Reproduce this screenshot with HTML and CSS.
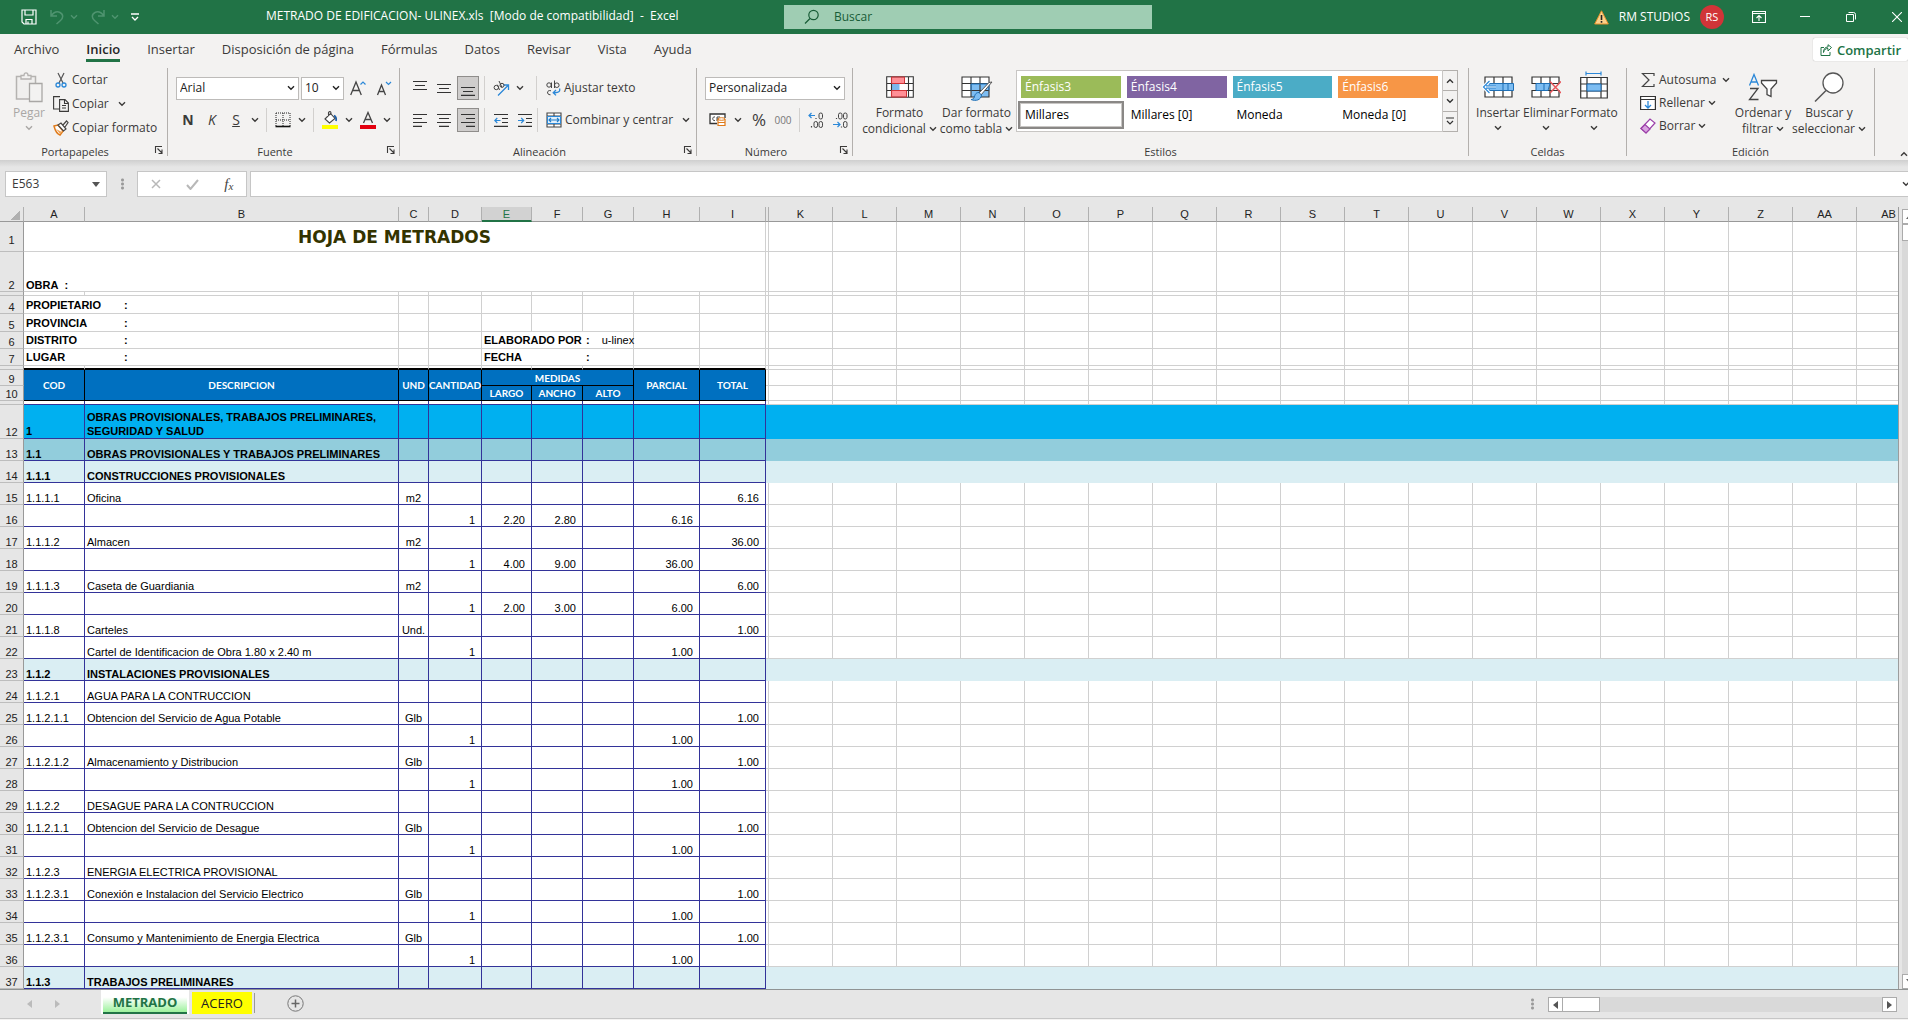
FILE: index.html
```html
<!DOCTYPE html>
<html lang="es">
<head>
<meta charset="utf-8">
<title>METRADO DE EDIFICACION- ULINEX.xls - Excel</title>
<link rel="stylesheet" href="styles.css">
</head>
<body>
<svg class="defs" width="0" height="0" aria-hidden="true">
  <symbol id="chev" viewBox="0 0 8 6"><path d="M1 1.2 4 4.2 7 1.2" fill="none" stroke="currentColor" stroke-width="1.4"/></symbol>
  <symbol id="launch" viewBox="0 0 10 10"><path d="M1.5 8V1.500H8M3.500 3.500 8 8M8 4.500V8.500H4.500" fill="none" stroke="currentColor" stroke-width="1.1"/></symbol>
</svg>

<header class="titlebar">
  <div class="quick">
    <button aria-label="Guardar"><svg width="16" height="16" viewBox="0 0 16 16"><path d="M1 1h14v14H3l-2-2zM4 1v5h8V1M5 15v-4.500h6V15M7 12.500V15" fill="none" stroke="#fff" stroke-width="1.2"/></svg></button>
    <button class="faded split" aria-label="Deshacer"><svg width="16" height="16" viewBox="0 0 16 16"><path d="M2 1v6h6M2 7C5 3 8 2 11 3.500c4 2 3 6 .500 8L7.500 15" fill="none" stroke="currentColor" stroke-width="1.5"/></svg><svg width="8" height="6"><use href="#chev"/></svg></button>
    <button class="faded split" aria-label="Rehacer"><svg width="16" height="16" viewBox="0 0 16 16"><path d="M14 1v6H8M14 7C11 3 8 2 5 3.500c-4 2-3 6-.500 8L8.500 15" fill="none" stroke="currentColor" stroke-width="1.5"/></svg><svg width="8" height="6"><use href="#chev"/></svg></button>
    <button aria-label="Personalizar barra"><svg width="8" height="8" viewBox="0 0 8 8"><path d="M0 1h8M1 4l3 3 3-3" fill="none" stroke="#fff" stroke-width="1.3"/></svg></button>
  </div>
  <h1 class="doc-title">METRADO DE EDIFICACION- ULINEX.xls&nbsp; [Modo de compatibilidad]&nbsp; -&nbsp; Excel</h1>
  <label class="search"><svg width="16" height="16" viewBox="0 0 16 16"><circle cx="9.500" cy="6" r="4.700" fill="none" stroke="#185c37" stroke-width="1.2"/><path d="M6 9.500 1 14.500" stroke="#185c37" stroke-width="1.3"/></svg><input type="text" placeholder="Buscar" aria-label="Buscar"></label>
  <div class="account">
    <svg width="15" height="15" viewBox="0 0 15 15"><path d="M7.500.800 14.300 14H.700z" fill="#fbd28b" stroke="#e8912d"/><path d="M7.500 5v5M7.500 11v1.700" stroke="#222" stroke-width="1.600"/></svg>
    <span class="user">RM STUDIOS</span><span class="avatar">RS</span>
  </div>
  <div class="window-buttons">
    <button aria-label="Opciones de la cinta"><svg width="14" height="12" viewBox="0 0 14 12"><path d="M.500.500h13v11H.500zM.500 2.500h13M7 10V4.500M4.500 7 7 4.500 9.500 7" fill="none" stroke="#fff" stroke-width="1.1"/></svg></button>
    <button aria-label="Minimizar"><svg width="10" height="10" viewBox="0 0 10 10"><path d="M0 4.500h10" stroke="#fff"/></svg></button>
    <button aria-label="Restaurar"><svg width="10" height="10" viewBox="0 0 10 10"><path d="M.500 2.500h7v7h-7zM2.500.500h5a2 2 0 0 1 2 2v5" fill="none" stroke="#fff"/></svg></button>
    <button aria-label="Cerrar"><svg width="10" height="10" viewBox="0 0 10 10"><path d="M0 0 10 10M10 0 0 10" stroke="#fff" stroke-width="1.1"/></svg></button>
  </div>
</header>

<nav class="tabs">
  <a href="#">Archivo</a><a href="#" class="active">Inicio</a><a href="#">Insertar</a><a href="#">Disposición de página</a><a href="#">Fórmulas</a><a href="#">Datos</a><a href="#">Revisar</a><a href="#">Vista</a><a href="#">Ayuda</a>
  <button class="share"><svg width="12" height="12" viewBox="0 0 12 12"><path d="M4 3.500H1v8h9V8M3.500 8.500C4 5.500 5.500 4.500 8 4.500V7l3.500-3.500L8 .700v2.300C5 3 3.500 5 3.500 8.500z" fill="none" stroke="#217346"/></svg>Compartir</button>
</nav>

<div class="ribbon">
  <section class="group clipboard">
    <div class="body">
      <button class="big paste"><span class="art"><svg width="28" height="32" viewBox="0 0 28 32"><path d="M1.500 5.500h19V28h-19z" fill="#f0efee" stroke="#b5b3b1" stroke-width="1.500"/><path d="M6 8V4.500h3C9 1 13 1 13 4.500h3V8z" fill="#f3f2f1" stroke="#b5b3b1" stroke-width="1.300"/><path d="M14.500 12.500h12.500v18H14.500z" fill="#f3f2f1" stroke="#a9a7a5" stroke-width="1.300"/></svg></span><span>Pegar</span><svg width="8" height="6"><use href="#chev"/></svg></button>
      <div class="stack">
        <button class="cmd"><svg width="16" height="16" viewBox="0 0 16 16"><path d="M5 1l5 10M11 1 6 11" fill="none" stroke="#555" stroke-width="1.200"/><circle cx="5" cy="13" r="2" fill="none" stroke="#2b88d8" stroke-width="1.300"/><circle cx="11" cy="13" r="2" fill="none" stroke="#2b88d8" stroke-width="1.300"/></svg>Cortar</button>
        <button class="cmd"><svg width="16" height="16" viewBox="0 0 16 16"><path d="M6 13H.600V.600H7M6.600 3.600H12l3.400 3.400v8.400H6.600zM11.500 4v3.500h3.500M9 9.500h4M9 12h4" fill="none" stroke="#3b3a39" stroke-width="1.100"/></svg>Copiar<svg class="far" width="8" height="6"><use href="#chev"/></svg></button>
        <button class="cmd"><svg width="16" height="16" viewBox="0 0 16 16"><path d="M1 6l4-1 5 6-3 4C4 14 2 10 1 6z" fill="#fff" stroke="#e07b1a" stroke-width="1.500"/><path d="M3 9l4 5 2-2z" fill="#f2a65a"/><path d="M5 5l3-2 5 6-2.500 2zM10 5l3.500-4L15 2.500 12 7" fill="#fff" stroke="#484644" stroke-width="1.200"/></svg>Copiar formato</button>
      </div>
    </div>
    <div class="caption"><span>Portapapeles</span><button aria-label="Más opciones de Portapapeles"><svg width="10" height="10"><use href="#launch"/></svg></button></div>
  </section>

  <section class="group font">
    <div class="body rows">
      <div class="row tight">
        <span class="combo font-name"><select aria-label="Fuente"><option>Arial</option></select><svg width="8" height="6"><use href="#chev"/></svg></span>
        <span class="combo font-size"><select aria-label="Tamaño de fuente"><option>10</option></select><svg width="8" height="6"><use href="#chev"/></svg></span>
        <button class="tool" aria-label="Aumentar tamaño"><svg width="16" height="16" viewBox="0 0 16 16"><path d="M.700 15 6 2l5.300 13M2.500 10.500h7" fill="none" stroke="#444" stroke-width="1.300"/><path d="M10.500 4.500 13 2l2.500 2.500" fill="none" stroke="#2b88d8" stroke-width="1.200"/></svg></button>
        <button class="tool" aria-label="Disminuir tamaño"><svg width="16" height="16" viewBox="0 0 16 16"><path d="M1.500 15 5.500 5l4 10M3 11.500h5" fill="none" stroke="#444" stroke-width="1.300"/><path d="M10 2l2.500 2.500L15 2" fill="none" stroke="#2b88d8" stroke-width="1.200"/></svg></button>
      </div>
      <div class="row">
        <button class="tool letter bold">N</button><button class="tool letter italic">K</button><button class="tool letter under">S</button><button class="arrow" aria-label="Subrayados"><svg width="8" height="6"><use href="#chev"/></svg></button>
        <i class="rule"></i>
        <button class="tool" aria-label="Bordes"><svg width="16" height="16" viewBox="0 0 16 16"><path d="M1 1h14M1 8h14M1 1v13M8 1v13M15 1v13" fill="none" stroke="#222" stroke-dasharray="1 1"/><path d="M.500 14.500h15" stroke="#111" stroke-width="1.600"/></svg></button><button class="arrow" aria-label="Más bordes"><svg width="8" height="6"><use href="#chev"/></svg></button>
        <i class="rule"></i>
        <button class="tool" aria-label="Color de relleno"><svg width="16" height="18" viewBox="0 0 16 18"><path d="M0 14h16v4H0z" fill="#ff0"/><path d="M3 8l5.500-5.500 4.500 5-5.500 4.500zM6.500 5V1.500c1-1.500 2.500-1 2.500.500V4" fill="#fff" stroke="#444" stroke-width="1.100"/><path d="M12 4.500c2 1 2.500 3 2 5.500" fill="none" stroke="#1f5fa8" stroke-width="1.800"/></svg></button><button class="arrow" aria-label="Más rellenos"><svg width="8" height="6"><use href="#chev"/></svg></button>
        <button class="tool" aria-label="Color de fuente"><svg width="16" height="18" viewBox="0 0 16 18"><path d="M0 14h16v4H0z" fill="#e3000f"/><path d="M3.500 12 8 1.500 12.500 12M5 8.500h6" fill="none" stroke="#444" stroke-width="1.300"/></svg></button><button class="arrow" aria-label="Más colores"><svg width="8" height="6"><use href="#chev"/></svg></button>
      </div>
    </div>
    <div class="caption"><span>Fuente</span><button aria-label="Más opciones de Fuente"><svg width="10" height="10"><use href="#launch"/></svg></button></div>
  </section>

  <section class="group align">
    <div class="body rows">
      <div class="row">
        <button class="tool" aria-label="Alinear arriba"><svg width="14" height="16" viewBox="0 0 14 16"><path d="M0 1.500h14M2 5.500h10M0 9.500h14" stroke="#333" stroke-width="1.200"/></svg></button>
        <button class="tool" aria-label="Alinear en medio"><svg width="14" height="16" viewBox="0 0 14 16"><path d="M0 4.500h14M2 8.500h10M0 12.500h14" stroke="#333" stroke-width="1.200"/></svg></button>
        <button class="tool on" aria-label="Alinear abajo"><svg width="14" height="16" viewBox="0 0 14 16"><path d="M0 7.500h14M2 11.500h10M0 15.400h14" stroke="#333" stroke-width="1.200"/></svg></button>
        <i class="rule"></i>
        <button class="tool" aria-label="Orientación"><svg width="17" height="16" viewBox="0 0 17 16"><path d="M5 15.500 15 5.500M10.500 5H15.500V10" fill="none" stroke="#2b88d8" stroke-width="1.300"/><circle cx="3.300" cy="7.500" r="2.200" fill="none" stroke="#444"/><path d="M4.500 4.800 6.500 10M6 1l3 6.500" stroke="#444"/><circle cx="9" cy="5.300" r="2" fill="none" stroke="#444"/></svg></button><button class="arrow" aria-label="Más orientaciones"><svg width="8" height="6"><use href="#chev"/></svg></button>
        <i class="rule push"></i>
        <button class="cmd"><svg width="16" height="16" viewBox="0 0 16 16"><circle cx="4" cy="5" r="2.200" fill="none" stroke="#444"/><path d="M6.500 2.500V8M9.500.500V8M6 10.800c-4-1.500-5 4-.500 4" fill="none" stroke="#444"/><circle cx="11.800" cy="5.200" r="2.300" fill="none" stroke="#444"/><path d="M14.500 8.500c1 3-1 4.500-5.500 4.200M11 10l-2.800 2.700L11 15.400" fill="none" stroke="#2b88d8" stroke-width="1.300"/></svg>Ajustar texto</button>
      </div>
      <div class="row">
        <button class="tool" aria-label="Alinear a la izquierda"><svg width="14" height="14" viewBox="0 0 14 14"><path d="M0 1.500h14M0 5.500h9M0 9.500h14M0 13.400h9" stroke="#333" stroke-width="1.200"/></svg></button>
        <button class="tool" aria-label="Centrar"><svg width="14" height="14" viewBox="0 0 14 14"><path d="M0 1.500h14M2 5.500h10M0 9.500h14M2 13.400h10" stroke="#333" stroke-width="1.200"/></svg></button>
        <button class="tool on" aria-label="Alinear a la derecha"><svg width="14" height="14" viewBox="0 0 14 14"><path d="M0 1.500h14M5 5.500h9M0 9.500h14M5 13.400h9" stroke="#333" stroke-width="1.200"/></svg></button>
        <i class="rule"></i>
        <button class="tool" aria-label="Disminuir sangría"><svg width="14" height="14" viewBox="0 0 14 14"><path d="M0 1.500h14M8 5.500h6M8 9.500h6M0 13.400h14" stroke="#333" stroke-width="1.200"/><path d="M6.500 7.500H.800M3.300 5 .800 7.500l2.500 2.500" fill="none" stroke="#2b88d8" stroke-width="1.200"/></svg></button>
        <button class="tool" aria-label="Aumentar sangría"><svg width="14" height="14" viewBox="0 0 14 14"><path d="M0 1.500h14M8 5.500h6M8 9.500h6M0 13.400h14" stroke="#333" stroke-width="1.200"/><path d="M0 7.500h5.700M3.200 5l2.500 2.500-2.500 2.500" fill="none" stroke="#2b88d8" stroke-width="1.200"/></svg></button>
        <i class="rule push"></i>
        <button class="cmd"><svg width="16" height="16" viewBox="0 0 16 16"><path d="M1 1h14v14H1zM1 4h14M1 12h14M8 1v3M8 12v3" fill="#fff" stroke="#444" stroke-width="1.100"/><path d="M1.500 4.500h13v7h-13z" fill="#e2f0fb" stroke="#2b88d8"/><path d="M3 8h10M5 6 3 8l2 2M11 6l2 2-2 2" fill="none" stroke="#1e7bc8" stroke-width="1.100"/></svg>Combinar y centrar<svg class="far" width="8" height="6"><use href="#chev"/></svg></button>
      </div>
    </div>
    <div class="caption"><span>Alineación</span><button aria-label="Más opciones de Alineación"><svg width="10" height="10"><use href="#launch"/></svg></button></div>
  </section>

  <section class="group number">
    <div class="body rows">
      <div class="row tight"><span class="combo number-format"><select aria-label="Formato de número"><option>Personalizada</option></select><svg width="8" height="6"><use href="#chev"/></svg></span></div>
      <div class="row">
        <button class="tool" aria-label="Moneda"><svg width="17" height="14" viewBox="0 0 17 14"><path d="M8 10.500H1V1h15v4" fill="#fff" stroke="#333" stroke-width="1.300"/><path d="M6 4C3 3 3 8.500 6 7.500M8 8V4h3M8 6h2" fill="none" stroke="#444"/><path d="M9 6.500h7v6H9z" fill="#fff" stroke="#e07b1a" stroke-width="1.200"/><ellipse cx="12.500" cy="6" rx="3.500" ry="1.300" fill="#fff" stroke="#e07b1a"/><path d="M9 9.500h7" stroke="#e07b1a"/></svg></button><button class="arrow wide" aria-label="Más monedas"><svg width="8" height="6"><use href="#chev"/></svg></button>
        <button class="tool percent">%</button><button class="tool thousands">000</button>
        <i class="rule"></i>
        <button class="tool decimals" aria-label="Aumentar decimales"><svg width="16" height="16" viewBox="0 0 16 16"><path d="M7 3.500H1M3.500 1 1 3.500 3.500 6" fill="none" stroke="#2b88d8" stroke-width="1.200"/><path d="M8 6v1M3.500 14v1.500" stroke="#444" stroke-width="1.200"/><g fill="none" stroke="#444"><rect x="11" y="1" width="3.500" height="6" rx="1.700"/><rect x="6" y="9.500" width="3.500" height="6" rx="1.700"/><rect x="11" y="9.500" width="3.500" height="6" rx="1.700"/></g></svg></button>
        <button class="tool decimals" aria-label="Disminuir decimales"><svg width="16" height="16" viewBox="0 0 16 16"><path d="M1 12.500h7M5.500 10 8 12.500 5.500 15" fill="none" stroke="#2b88d8" stroke-width="1.200"/><path d="M4.500 6v1M9.500 14.500v1" stroke="#444" stroke-width="1.200"/><g fill="none" stroke="#444"><rect x="6.500" y="1" width="3.500" height="6" rx="1.700"/><rect x="11.500" y="1" width="3.500" height="6" rx="1.700"/><rect x="11.500" y="9.500" width="3.500" height="6" rx="1.700"/></g></svg></button>
      </div>
    </div>
    <div class="caption"><span>Número</span><button aria-label="Más opciones de Número"><svg width="10" height="10"><use href="#launch"/></svg></button></div>
  </section>

  <section class="group styles">
    <div class="body">
      <button class="big"><span class="art"><svg width="28" height="22" viewBox="0 0 28 22"><path d="M.700.700h26.600v20.600H.700z" fill="#fff"/><path d="M5.500 1h13v6h-13zM5.500 15h15v6h-15z" fill="#ff8f96"/><path d="M5.500 8h8v6h-8z" fill="#7bb7ec"/><path d="M.700.700h26.600v20.600H.700zM.700 7.500h26.600M.700 14.500h26.600M5.500.700v20.600M22.500.700v20.600" fill="none" stroke="#333" stroke-width="1.100"/><path d="M5.500 1h13v6.500h-13zM5.500 14.500h15v6.500h-15z" fill="none" stroke="#d13438"/></svg></span><span>Formato</span><span class="line">condicional <svg width="8" height="6"><use href="#chev"/></svg></span></button>
      <button class="big"><span class="art"><svg width="32" height="28" viewBox="0 0 32 28"><path d="M1 4h27v20H1z" fill="#fff"/><path d="M10 11h18v13H10z" fill="#7dbdf2"/><path d="M1 4h27v20H1zM1 10.500h27M1 17.500h27M10 4v20M19 4v20" fill="none" stroke="#333" stroke-width="1.100"/><path d="M10 17.500V11h18v6.500" fill="none" stroke="#1e7bc8"/><path d="M31 9 20 22l-2-2L28 9.500z" fill="#fff" stroke="#555"/><path d="M18 19.500c-4 0-4 3-5 5.500-1 1-2 1.500-3 1.500 5 2 10 .500 10.500-4.500z" fill="#7dbdf2" stroke="#1e6fb5"/></svg></span><span>Dar formato</span><span class="line">como tabla <svg width="8" height="6"><use href="#chev"/></svg></span></button>
      <div class="gallery">
        <div class="swatches">
          <button class="swatch accent3">Énfasis3</button><button class="swatch accent4">Énfasis4</button><button class="swatch accent5">Énfasis5</button><button class="swatch accent6">Énfasis6</button>
          <button class="swatch plain chosen">Millares</button><button class="swatch plain">Millares [0]</button><button class="swatch plain">Moneda</button><button class="swatch plain">Moneda [0]</button>
        </div>
        <div class="spinner">
          <button aria-label="Fila anterior"><svg class="flip" width="8" height="6"><use href="#chev"/></svg></button>
          <button aria-label="Fila siguiente"><svg width="8" height="6"><use href="#chev"/></svg></button>
          <button aria-label="Más estilos"><svg width="8" height="8" viewBox="0 0 8 8"><path d="M0 1h8M1 4l3 3 3-3" fill="none" stroke="#333" stroke-width="1.200"/></svg></button>
        </div>
      </div>
    </div>
    <div class="caption"><span>Estilos</span></div>
  </section>

  <section class="group cells">
    <div class="body">
      <button class="big"><span class="art"><svg width="32" height="28" viewBox="0 0 32 28"><path d="M3 4h27v20H3zM3 10.500h27M3 17.500h27M12 4v20M21 4v20" fill="#fff" stroke="#333" stroke-width="1.200"/><path d="M7 10.500h24.500v7H7z" fill="#7dbdf2" stroke="#1e6fb5"/><path d="M21 11v6M26 11v6" stroke="#1e6fb5"/><path d="M14 14H1.500M7.500 8 1.500 14l6 6" fill="none" stroke="#fff" stroke-width="3.500"/><path d="M14 12.800H4M14 15.200H4M7.500 8 1.500 14l6 6" fill="none" stroke="#2b88d8" stroke-width="1.200"/></svg></span><span>Insertar</span><svg width="8" height="6"><use href="#chev"/></svg></button>
      <button class="big"><span class="art"><svg width="30" height="28" viewBox="0 0 30 28"><path d="M1 10.500V4h27v6.500H1zM1 17.500h27V24H1zM10 4v20M19 4v20" fill="#fff" stroke="#333" stroke-width="1.200"/><path d="M5 10.500h14l-2 7H5z" fill="#7dbdf2" stroke="#1e6fb5"/><path d="M13 11v6" stroke="#1e6fb5"/><path d="M19 8.500 30 20M30 8.500 19 20" stroke="#e8565b" stroke-width="1.500"/></svg></span><span>Eliminar</span><svg width="8" height="6"><use href="#chev"/></svg></button>
      <button class="big"><span class="art"><svg width="28" height="32" viewBox="0 0 28 32"><path d="M6 2.500h15M6 .500v4M21 .500v4" stroke="#2b88d8" stroke-width="1.200"/><path d="M.700 6.500h26.600V27H.700zM.700 13h26.600M.700 20h26.600M7 6.500V27M21 6.500V27" fill="#fff" stroke="#333" stroke-width="1.200"/><path d="M7 13h14v7H7z" fill="#7dbdf2" stroke="#1e6fb5"/></svg></span><span>Formato</span><svg width="8" height="6"><use href="#chev"/></svg></button>
    </div>
    <div class="caption"><span>Celdas</span></div>
  </section>

  <section class="group editing">
    <div class="body">
      <div class="stack">
        <button class="cmd"><svg width="16" height="16" viewBox="0 0 16 16"><path d="M14 4V1.500H2.500L9 8l-6.500 6.500H14V12" fill="none" stroke="#444" stroke-width="1.200"/></svg>Autosuma<svg class="far" width="8" height="6"><use href="#chev"/></svg></button>
        <button class="cmd"><svg width="16" height="16" viewBox="0 0 16 16"><path d="M.600 1.500h14.800v13H.600zM.600 4.500h14.800" fill="#fff" stroke="#333" stroke-width="1.200"/><path d="M8 6v7M5 10l3 3 3-3" fill="none" stroke="#2b88d8" stroke-width="1.300"/></svg>Rellenar<svg width="8" height="6"><use href="#chev"/></svg></button>
        <button class="cmd"><svg width="16" height="16" viewBox="0 0 16 16"><path d="M1 10.500 10 1l5 4-9 10z" fill="#fff" stroke="#9b3fa8" stroke-width="1.200"/><path d="M1 10.500 5 6.500l5 4.500-4 4z" fill="#d9a3e0" stroke="#9b3fa8" stroke-width="1.200"/></svg>Borrar<svg width="8" height="6"><use href="#chev"/></svg></button>
      </div>
      <button class="big"><span class="art"><svg width="30" height="28" viewBox="0 0 30 28"><path d="M1.500 12.500 6 1.500l4.500 11M3 9h6" fill="none" stroke="#2b88d8" stroke-width="1.300"/><path d="M2 15.500h8L1.500 26.500h9" fill="none" stroke="#444" stroke-width="1.300"/><path d="M13.500 7.500h15v2.500L23 16v7.500l-4-2V16l-5.500-6z" fill="#fff" stroke="#444" stroke-width="1.300"/></svg></span><span>Ordenar y</span><span class="line">filtrar <svg width="8" height="6"><use href="#chev"/></svg></span></button>
      <button class="big"><span class="art"><svg width="30" height="30" viewBox="0 0 30 30"><circle cx="19" cy="11" r="10" fill="#fff" stroke="#555" stroke-width="1.300"/><path d="M12 18.500 1 29.500" stroke="#555" stroke-width="1.500"/></svg></span><span>Buscar y</span><span class="line">seleccionar <svg width="8" height="6"><use href="#chev"/></svg></span></button>
    </div>
    <div class="caption"><span>Edición</span></div>
  </section>
  <button class="collapse" aria-label="Contraer la cinta"><svg class="flip" width="8" height="6"><use href="#chev"/></svg></button>
</div>

<div class="formula-bar">
  <label class="name-box"><input type="text" value="E563" aria-label="Cuadro de nombres"><svg width="8" height="5" viewBox="0 0 8 5"><path d="M0 0h8L4 5z" fill="#555"/></svg></label>
  <i class="dots"></i>
  <div class="entry-buttons">
    <button aria-label="Cancelar"><svg width="10" height="10" viewBox="0 0 10 10"><path d="M1 1l8 8M9 1 1 9" stroke="#b8b8b8" stroke-width="1.500"/></svg></button>
    <button aria-label="Introducir"><svg width="13" height="11" viewBox="0 0 13 11"><path d="M1 6l3.500 4L12 1" fill="none" stroke="#b8b8b8" stroke-width="2"/></svg></button>
    <button class="fx">f<small>x</small></button>
  </div>
  <input class="formula" type="text" aria-label="Barra de fórmulas">
  <button class="expand" aria-label="Expandir barra de fórmulas"><svg width="8" height="6"><use href="#chev"/></svg></button>
</div>

<main class="workspace">
  <div class="sheet"><table id="grid"></table></div>
  <div class="vscroll"><button aria-label="Subir"><svg width="8" height="5" viewBox="0 0 8 5"><path d="M0 5h8L4 0z" fill="#666"/></svg></button><i class="thumb"></i><i class="track"></i><button aria-label="Bajar"><svg width="8" height="5" viewBox="0 0 8 5"><path d="M0 0h8L4 5z" fill="#666"/></svg></button></div>
</main>

<footer class="sheet-tabs">
  <div class="nav"><button aria-label="Hoja anterior"><svg width="5" height="8" viewBox="0 0 5 8"><path d="M5 0v8L0 4z" fill="#bbb"/></svg></button><button aria-label="Hoja siguiente"><svg width="5" height="8" viewBox="0 0 5 8"><path d="M0 0v8l5-4z" fill="#bbb"/></svg></button></div>
  <button class="sheet-tab current">METRADO</button>
  <button class="sheet-tab yellow">ACERO</button>
  <i class="tab-rule"></i>
  <button class="add" aria-label="Nueva hoja"><svg width="17" height="17" viewBox="0 0 17 17"><path d="M8.500 4.500v8M4.500 8.500h8" stroke="#666" stroke-width="1.500"/><circle cx="8.500" cy="8.500" r="7.700" fill="none" stroke="#777"/></svg></button>
  <i class="dots"></i>
  <div class="hscroll"><button aria-label="Izquierda"><svg width="5" height="8" viewBox="0 0 5 8"><path d="M5 0v8L0 4z" fill="#555"/></svg></button><i class="thumb"></i><i class="track"></i><button aria-label="Derecha"><svg width="5" height="8" viewBox="0 0 5 8"><path d="M0 0v8l5-4z" fill="#555"/></svg></button></div>
</footer>
<div class="status"></div>
<script src="sheet.js"></script>
</body>
</html>
```
FILE: sheet.js
```js
const letters = ['A','B','C','D','E','F','G','H','I','J','K','L','M','N','O','P','Q','R','S','T','U','V','W','X','Y','Z','AA','AB'];
const widths = [61, 314, 30, 53, 50, 51, 51, 66, 66, 3];
const heights = { 1: 30, 2: 40, 3: 4, 4: 18, 5: 18, 6: 17, 7: 17, 8: 4, 9: 16, 10: 15, 11: 4, 12: 34 };

// Heading block: [text, colspan, class, rowspan]
const heading = {
  1: [['HOJA DE METRADOS', 9, 'title']],
  2: [['OBRA&nbsp; :', 9, 'strong']],
  4: [['<span>PROPIETARIO</span>:', 2, 'field'], ...blanks(7)],
  5: [['<span>PROVINCIA</span>:', 2, 'field'], ...blanks(7)],
  6: [['<span>DISTRITO</span>:', 2, 'field'], ...blanks(2), ['<span>ELABORADO POR</span>: <em>u-linex</em>', 3, 'field author'], ...blanks(2)],
  7: [['<span>LUGAR</span>:', 2, 'field'], ...blanks(2), ['<span>FECHA</span>:', 3, 'field author'], ...blanks(2)],
  9: [['COD', 1, 'head', 2], ['DESCRIPCION', 1, 'head', 2], ['UND', 1, 'head', 2], ['CANTIDAD', 1, 'head', 2], ['MEDIDAS', 3, 'head'], ['PARCIAL', 1, 'head', 2], ['TOTAL', 1, 'head', 2]],
  10: [['LARGO', 1, 'head'], ['ANCHO', 1, 'head'], ['ALTO', 1, 'head']]
};

// Data rows from 12 on: code, description, unit, quantity, length, width, height, partial, total, level
const data = [
  ['1', 'OBRAS PROVISIONALES, TRABAJOS PRELIMINARES,<br>SEGURIDAD Y SALUD', '', '', '', '', '', '', '', 'level1'],
  ['1.1', 'OBRAS PROVISIONALES Y TRABAJOS PRELIMINARES', '', '', '', '', '', '', '', 'level2'],
  ['1.1.1', 'CONSTRUCCIONES PROVISIONALES', '', '', '', '', '', '', '', 'level3'],
  ['1.1.1.1', 'Oficina', 'm2', '', '', '', '', '', '6.16'],
  ['', '', '', '1', '2.20', '2.80', '', '6.16', ''],
  ['1.1.1.2', 'Almacen', 'm2', '', '', '', '', '', '36.00'],
  ['', '', '', '1', '4.00', '9.00', '', '36.00', ''],
  ['1.1.1.3', 'Caseta de Guardiania', 'm2', '', '', '', '', '', '6.00'],
  ['', '', '', '1', '2.00', '3.00', '', '6.00', ''],
  ['1.1.1.8', 'Carteles', 'Und.', '', '', '', '', '', '1.00'],
  ['', 'Cartel de Identificacion de Obra 1.80 x 2.40 m', '', '1', '', '', '', '1.00', ''],
  ['1.1.2', 'INSTALACIONES PROVISIONALES', '', '', '', '', '', '', '', 'level3'],
  ['1.1.2.1', 'AGUA PARA LA CONTRUCCION', '', '', '', '', '', '', ''],
  ['1.1.2.1.1', 'Obtencion del Servicio de Agua Potable', 'Glb', '', '', '', '', '', '1.00'],
  ['', '', '', '1', '', '', '', '1.00', ''],
  ['1.1.2.1.2', 'Almacenamiento y Distribucion', 'Glb', '', '', '', '', '', '1.00'],
  ['', '', '', '1', '', '', '', '1.00', ''],
  ['1.1.2.2', 'DESAGUE PARA LA CONTRUCCION', '', '', '', '', '', '', ''],
  ['1.1.2.1.1', 'Obtencion del Servicio de Desague', 'Glb', '', '', '', '', '', '1.00'],
  ['', '', '', '1', '', '', '', '1.00', ''],
  ['1.1.2.3', 'ENERGIA ELECTRICA PROVISIONAL', '', '', '', '', '', '', ''],
  ['1.1.2.3.1', 'Conexión e Instalacion del Servicio Electrico', 'Glb', '', '', '', '', '', '1.00'],
  ['', '', '', '1', '', '', '', '1.00', ''],
  ['1.1.2.3.1', 'Consumo y Mantenimiento de Energia Electrica', 'Glb', '', '', '', '', '', '1.00'],
  ['', '', '', '1', '', '', '', '1.00', ''],
  ['1.1.3', 'TRABAJOS PRELIMINARES', '', '', '', '', '', '', '', 'level3']
];

function blanks(count, cls = '') {
  return Array.from({ length: count }, () => ['', 1, cls]);
}

function cell([text, span, cls, rows]) {
  return `<td class="${cls || ''}" colspan="${span || 1}" rowspan="${rows || 1}">${text}</td>`;
}

const html = ['<colgroup><col style="width:24px">'];
letters.forEach((_, i) => html.push(`<col style="width:${widths[i] || 64}px">`));
html.push('</colgroup><thead><tr><th class="corner"></th>');
letters.forEach(l => html.push(`<th scope="col" class="${l === 'E' ? 'selected' : ''}">${l === 'J' ? '' : l}</th>`));
html.push('</tr></thead><tbody>');

for (let r = 1; r <= 37; r++) {
  const item = data[r - 12];
  const level = item ? item[9] || '' : '';
  const thin = r === 3 || r === 8 || r === 11;
  let cells;
  if (item) cells = item.slice(0, 9).map((t, i) => [t, 1, i < 2 ? 'item' : i === 2 ? 'item unit' : 'item num']);
  else cells = heading[r] || blanks(9, r === 8 ? 'above-head' : r === 11 ? 'item' : '');
  html.push(`<tr class="${level} ${thin ? 'thin' : ''} row-${r}" style="height:${heights[r] || 22}px"><th scope="row">${thin ? '' : r}</th>`);
  html.push(cells.map(cell).join(''), blanks(19).map(cell).join(''), '</tr>');
}
html.push('</tbody>');
document.getElementById('grid').innerHTML = html.join('');
```
FILE: styles.css
```css
* { box-sizing: border-box; }
body {
  margin: 0;
  height: 100vh;
  display: flex;
  flex-direction: column;
  overflow: hidden;
  background: #e6e6e6;
  color: #3b3a39;
  font: 12px/16px "Open Sans", "Noto Sans", sans-serif;
}
button, input, select { font: inherit; color: inherit; margin: 0; padding: 0; border: 0; background: none; border-radius: 0; }
button { display: flex; align-items: center; justify-content: center; white-space: nowrap; }
svg { flex: none; display: block; }
.defs { position: absolute; }
.flip { transform: rotate(180deg); }

/* Title bar */
.titlebar { flex: none; height: 34px; display: flex; align-items: center; background: #217346; color: #fff; }
.quick { flex: none; width: 266px; display: flex; align-items: center; padding-left: 21px; gap: 12px; }
.quick .split { gap: 5px; }
.faded { color: #4f9470; }
.doc-title { flex: none; width: 518px; margin: 0; font-size: 12px; font-weight: 400; line-height: 16px; white-space: nowrap; padding-bottom: 2px; }
.search { flex: none; width: 368px; height: 24px; display: flex; align-items: center; gap: 14px; padding-left: 20px; background: #9fcdb3; color: #185c37; }
.search input { flex: 1; min-width: 0; outline: 0; }
.search input::placeholder { color: #185c37; opacity: 1; }
.account { flex: 1; display: flex; align-items: center; justify-content: flex-end; gap: 10px; }
.avatar { width: 24px; height: 24px; border-radius: 50%; background: #d13438; text-align: center; line-height: 24px; font-size: 11px; }
.window-buttons { display: flex; align-items: center; margin-left: 12px; }
.window-buttons button { width: 46px; height: 32px; }
.window-buttons button:last-child { width: 34px; padding-left: 12px; }

/* Ribbon tabs */
.tabs { flex: none; height: 34px; display: flex; gap: 27px; padding-left: 14px; background: #f3f2f1; font-size: 13px; align-items: flex-start; }
.tabs a { color: inherit; text-decoration: none; height: 28px; line-height: 18px; padding-top: 6px; white-space: nowrap; }
.tabs .active { border-bottom: 3px solid #217346; font-weight: 600; color: #262626; }
.share { margin-left: auto; margin-top: 4px; height: 23px; width: 95px; gap: 5px; background: #fff; border-radius: 2px; box-shadow: 0 0 1px #999; color: #217346; font-size: 13px; font-weight: 600; }

/* Ribbon */
.ribbon { flex: none; height: 92px; display: flex; background: #f3f2f1; }
.group { flex: none; height: 88px; display: flex; flex-direction: column; border-right: 1px solid #b3b0ad; }
.clipboard { width: 168px; }
.font { width: 232px; }
.align { width: 297px; }
.number { width: 156px; }
.styles { flex: 1; }
.cells { width: 158px; }
.editing { width: 248px; }
.body { height: 76px; display: flex; }
.caption { height: 12px; display: flex; align-items: center; line-height: 16px; font-size: 11px; }
.caption span { flex: 1; text-align: center; padding-top: 4px; }
.caption button { width: 17px; height: 12px; }
.big { flex-direction: column; justify-content: flex-start; }
.big .art { height: 37px; display: flex; align-items: center; }
.big > svg { margin-top: 4px; }
.big .line { display: flex; align-items: center; gap: 3px; }
.paste { width: 42px; margin: 0 6px 0 8px; color: #a9a7a5; }
.stack { display: flex; flex-direction: column; }
.clipboard .stack { flex: 1; margin-left: -3px; }
.stack .cmd { height: 24px; }
.cmd { justify-content: flex-start; gap: 3px; }
.cmd .far { margin-left: 6px; }
.rows { flex-direction: column; padding: 8px 0 0 8px; gap: 8px; }
.row { height: 24px; display: flex; align-items: center; }
.tight { gap: 2px; }
.tool { flex: none; width: 24px; height: 24px; }
.on { width: 22px; margin: 0 1px; background: #cfcdcc; border: 1px solid #8f8d8b; }
.letter { font-size: 14px; }
.bold { font-weight: 700; }
.italic { font-style: italic; }
.under { text-decoration: underline; }
.arrow { width: 14px; height: 24px; }
.rule { flex: none; width: 1px; height: 24px; margin: 0 4px; background: #d2d0ce; }
.combo { flex: none; display: grid; align-items: center; height: 23px; background: #fff; border: 1px solid #bdbbb9; color: #222; }
.combo > * { grid-area: 1 / 1; }
.combo select { appearance: none; height: 21px; padding-left: 3px; outline: 0; }
.combo svg { justify-self: end; margin-right: 3px; pointer-events: none; }
.font-name { width: 123px; }
.font-size { width: 43px; }
.number-format { width: 140px; }
.align .push { margin: 0 8px 0 auto; }
.align .cmd { width: 151px; }
.wide { width: 20px; }
.percent { font-size: 17px; }
.thousands { font-size: 10px; color: #777; }
.styles .body { padding-left: 8px; }
.styles .big { width: 77px; }
.gallery { flex: 1; display: flex; height: 62px; margin: 2px 10px 0 1px; }
.swatches { flex: 1; display: grid; grid-template-columns: repeat(4, 1fr); grid-template-rows: 22px 28px; gap: 3px 6px; padding: 5px 4px; border: 1px solid #c8c6c4; background: #fff; }
.swatch { justify-content: flex-start; padding-left: 4px; color: #fff; }
.accent3 { background: #9bbb59; }
.accent4 { background: #8064a2; }
.accent5 { background: #4bacc6; }
.accent6 { background: #f79646; }
.plain { color: #000; }
.chosen { margin: 0 -3px; padding-left: 5px; border: 2px solid #8a8886; box-shadow: inset 0 0 0 1px #c8c6c4; }
.spinner { width: 15px; display: flex; flex-direction: column; }
.spinner button { flex: 1; border: 1px solid #b3b0ad; border-left-width: 0; color: #333; }
.spinner button + button { border-top: 0; }
.cells .body { padding-left: 5px; }
.cells .big { width: 48px; }
.editing .body { padding-left: 13px; }
.editing .stack { width: 90px; }
.editing .stack .cmd { height: 23px; }
.editing .big { width: 66px; }
.editing .stack .far { margin-left: 3px; }
.collapse { width: 33px; align-items: flex-end; justify-content: flex-end; padding-bottom: 3px; }

/* Formula bar */
.formula-bar { flex: none; height: 47px; display: flex; align-items: flex-start; padding: 11px 0 0 5px; background: linear-gradient(#cfcfcf, #e6e6e6 7px); }
.name-box { width: 102px; height: 26px; display: flex; align-items: center; padding: 0 6px; background: #fff; border: 1px solid #c6c6c6; }
.name-box input { flex: 1; min-width: 0; outline: 0; }
.dots { width: 3px; height: 12px; margin: 7px 13px 7px 14px; background: radial-gradient(circle, #999 1px, transparent 2px) 0 0 / 3px 4px; }
.entry-buttons { width: 110px; height: 26px; display: flex; justify-content: space-around; background: #fff; border: 1px solid #c6c6c6; }
.fx { font: italic 15px/20px "Liberation Serif", serif; color: #444; }
.fx small { font-size: 11px; padding-top: 4px; }
.formula { flex: 1; height: 26px; margin-left: 3px; background: #fff; border: 1px solid #c6c6c6; border-right: 0; outline: 0; }
.expand { width: 6px; height: 26px; background: #fff; border: solid #c6c6c6; border-width: 1px 0; overflow: hidden; justify-content: flex-start; }

/* Worksheet */
.workspace { flex: 1; min-height: 0; display: flex; border-bottom: 1px solid #8f9393; }
.sheet { flex: 1; min-width: 0; overflow: hidden; background: #fff; border-right: 1px solid #9c9c9c; }
.vscroll { flex: none; width: 9px; padding: 2px 0 0 3px; display: flex; flex-direction: column; overflow: hidden; }
.vscroll button { height: 15px; width: 15px; background: #fff; border: 1px solid #ababab; }
.vscroll .thumb { height: 17px; width: 15px; background: #fff; border: 1px solid #ababab; }
.vscroll .track { flex: 1; background: #d9d9d9; }
#grid { table-layout: fixed; width: 1921px; border-collapse: separate; border-spacing: 0; color: #000; font: 11px/12px "Liberation Sans", Arial, sans-serif; }
#grid th, #grid td { padding: 0; border: 0 solid #d0d0d0; border-width: 0 1px 1px 0; white-space: nowrap; vertical-align: bottom; }
#grid th { background: #e6e6e6; font-weight: 400; color: #222; }
#grid thead th { height: 15px; padding-bottom: 1px; border-color: #b0b0b0; border-bottom-color: #999; }
#grid thead .selected { padding-bottom: 0; background: #d2d2d2; color: #217346; border-bottom: 2px solid #217346; }
#grid .corner { background: linear-gradient(135deg, transparent 70%, #b0b0b0 70%) 0 0 / 20px 13px no-repeat #e6e6e6; }
#grid tbody th { border-right-color: #999; border-bottom-color: #bdbdbd; }
#grid .row-1 th { padding-bottom: 5px; }
#grid .thin > * { font-size: 0; line-height: 0; }
#grid .title { text-align: center; vertical-align: middle; color: #330; font: 700 17px/20px "DejaVu Sans", sans-serif; }
#grid .strong { font-weight: 700; padding-left: 2px; }
#grid .field { font-weight: 700; padding: 0 0 2px 2px; }
.field span { display: inline-block; width: 98px; }
.author span { width: 102px; }
.field em { font-style: normal; font-weight: 400; padding-left: 9px; }
#grid .above-head { border-bottom: 2px solid #000; border-right-color: #d0d0d0; }
#grid .head { background: #0070c0; color: #fff; border-color: #000; text-align: center; vertical-align: middle; font: 700 10px/12px Lato, "Open Sans", sans-serif; }
.row-10 > * { border-bottom-color: #8c8c8c; }
#grid .item { border-color: #333399; padding: 0 2px; }
#grid .unit { text-align: center; padding: 0; }
#grid .num { text-align: right; padding: 0 6px 0 0; }
.level1 .item, .level2 .item, .level3 .item { font-weight: 700; }
#grid .row-12 .item { line-height: 14px; }
#grid .level1 td { background: #00b0f0; }
#grid .level2 td { background: #92cddc; }
#grid .level3 td { background: #daeef3; }
#grid .level1 td:not(.item), #grid .level2 td:not(.item), #grid .level3 td:not(.item) { border-color: transparent; }

/* Sheet tabs */
.sheet-tabs { flex: none; height: 28px; display: flex; align-items: flex-start; background: #e6e6e6; }
.nav { width: 101px; height: 27px; display: flex; align-items: center; padding-left: 27px; gap: 23px; }
.sheet-tab { height: 24px; font-size: 13px; }
.current { width: 88px; background: linear-gradient(#fff 30%, #8ff08f); border: solid #fff; border-width: 0 2px; box-shadow: inset 0 -2px #217346; color: #217346; font-weight: 700; }
.yellow { width: 60px; height: 22px; margin: 2px 2px 0 3px; background: #ff0; color: #222; }
.tab-rule { width: 1px; height: 20px; margin-top: 3px; background: #999; }
.add { margin: 5px 0 0 32px; }
.sheet-tabs .dots { margin: 8px 14px 0 auto; }
.hscroll { width: 349px; height: 15px; margin: 7px 11px 0 0; display: flex; background: #d9d9d9; }
.hscroll button { width: 15px; background: #fff; border: 1px solid #ababab; }
.hscroll .thumb { width: 37px; background: #fff; border: 1px solid #ababab; border-left: 0; }
.hscroll .track { flex: 1; }
.status { flex: none; height: 2px; background: #f3f2f1; border-top: 1px solid #c6c6c6; }
```
